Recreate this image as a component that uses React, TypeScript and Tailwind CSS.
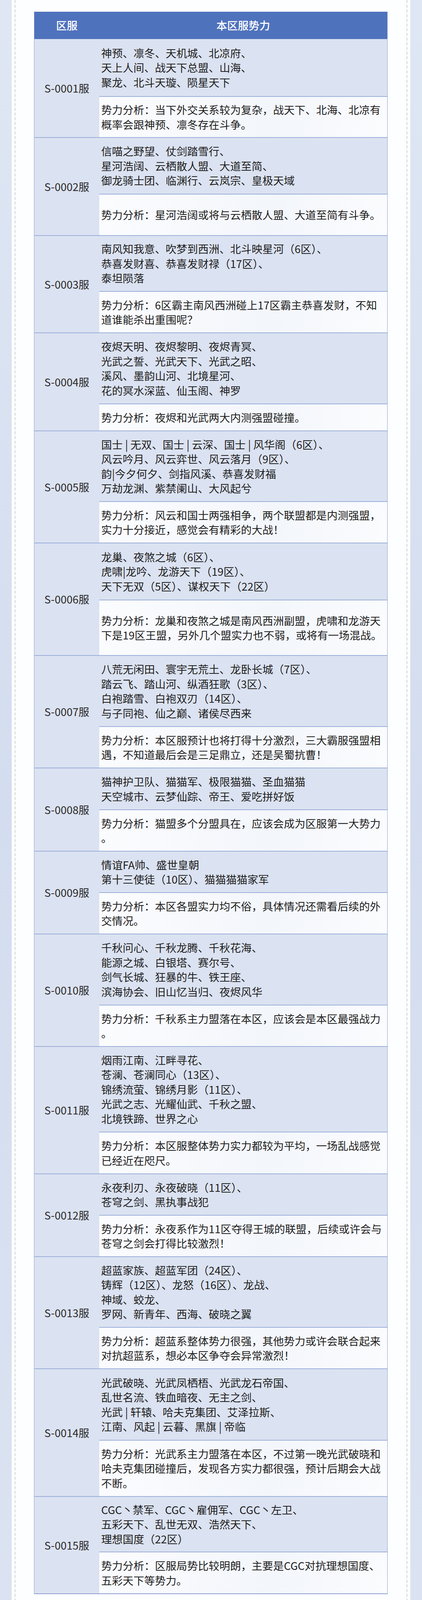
import React from "react";

type Row = {
  id: string;
  names: string[];
  analysis: string[];
  nh: string;
  ah: string;
};

const rows: Row[] = [
  {
    id: "S-0001服",
    names: ["神预、凛冬、天机城、北凉府、", "天上人间、战天下总盟、山海、", "聚龙、北斗天璇、陨星天下"],
    analysis: ["势力分析：当下外交关系较为复杂，战天下、北海、北凉有", "概率会跟神预、凛冬存在斗争。"],
    nh: "h-[146px]",
    ah: "h-[105px]",
  },
  {
    id: "S-0002服",
    names: ["信喵之野望、仗剑踏雪行、", "星河浩阔、云栖散人盟、大道至简、", "御龙骑士团、临渊行、云岚宗、皇极天域"],
    analysis: ["势力分析：星河浩阔或将与云栖散人盟、大道至简有斗争。"],
    nh: "h-[145px]",
    ah: "h-[106px]",
  },
  {
    id: "S-0003服",
    names: ["南风知我意、吹梦到西洲、北斗映星河（6区）、", "恭喜发财喜、恭喜发财禄（17区）、", "泰坦陨落"],
    analysis: ["势力分析：6区霸主南风西洲碰上17区霸主恭喜发财，不知", "道谁能杀出重围呢？"],
    nh: "h-[143px]",
    ah: "h-[106px]",
  },
  {
    id: "S-0004服",
    names: ["夜烬天明、夜烬黎明、夜烬青冥、", "光武之誓、光武天下、光武之昭、", "溪风、墨韵山河、北境星河、", "花的冥水深蓝、仙玉阁、神罗"],
    analysis: ["势力分析：夜烬和光武两大内测强盟碰撞。"],
    nh: "h-[182px]",
    ah: "h-[69px]",
  },
  {
    id: "S-0005服",
    names: ["国士 | 无双、国士 | 云深、国士 | 风华阁（6区）、", "风云吟月、风云弈世、风云落月（9区）、", "韵|今夕何夕、剑指风溪、恭喜发财福", "万劫龙渊、紫禁阑山、大风起兮"],
    analysis: ["势力分析：风云和国士两强相争，两个联盟都是内测强盟，", "实力十分接近，感觉会有精彩的大战！"],
    nh: "h-[181px]",
    ah: "h-[106px]",
  },
  {
    id: "S-0006服",
    names: ["龙巢、夜煞之城（6区）、", "虎啸|龙吟、龙游天下（19区）、", "天下无双（5区）、谋权天下（22区）"],
    analysis: ["势力分析：龙巢和夜煞之城是南风西洲副盟，虎啸和龙游天", "下是19区王盟，另外几个盟实力也不弱，或将有一场混战。"],
    nh: "h-[146px]",
    ah: "h-[142px]",
  },
  {
    id: "S-0007服",
    names: ["八荒无闲田、寰宇无荒土、龙卧长城（7区）、", "踏云飞、踏山河、纵酒狂歌（3区）、", "白袍踏雪、白袍双刃（14区）、", "与子同袍、仙之巅、诸侯尽西来"],
    analysis: ["势力分析：本区服预计也将打得十分激烈，三大霸服强盟相", "遇，不知道最后会是三足鼎立，还是吴蜀抗曹！"],
    nh: "h-[182px]",
    ah: "h-[106px]",
  },
  {
    id: "S-0008服",
    names: ["猫神护卫队、猫猫军、极限猫猫、圣血猫猫", "天空城市、云梦仙踪、帝王、爱吃拼好饭"],
    analysis: ["势力分析：猫盟多个分盟具在，应该会成为区服第一大势力", "。"],
    nh: "h-[107px]",
    ah: "h-[106px]",
  },
  {
    id: "S-0009服",
    names: ["情谊FA帅、盛世皇朝", "第十三使徒（10区）、猫猫猫猫家军"],
    analysis: ["势力分析：本区各盟实力均不俗，具体情况还需看后续的外", "交情况。"],
    nh: "h-[106px]",
    ah: "h-[106px]",
  },
  {
    id: "S-0010服",
    names: ["千秋问心、千秋龙腾、千秋花海、", "能源之城、白银塔、赛尔号、", "剑气长城、狂暴的牛、铁王座、", "滨海协会、旧山忆当归、夜烬风华"],
    analysis: ["势力分析：千秋系主力盟落在本区，应该会是本区最强战力", "。"],
    nh: "h-[182px]",
    ah: "h-[106px]",
  },
  {
    id: "S-0011服",
    names: ["烟雨江南、江畔寻花、", "苍澜、苍澜同心（13区）、", "锦绣流萤、锦绣月影（11区）、", "光武之志、光耀仙武、千秋之盟、", "北境铁蹄、世界之心"],
    analysis: ["势力分析：本区服整体势力实力都较为平均，一场乱战感觉", "已经近在咫尺。"],
    nh: "h-[219px]",
    ah: "h-[107px]",
  },
  {
    id: "S-0012服",
    names: ["永夜利刃、永夜破晓（11区）、", "苍穹之剑、黑执事战犯"],
    analysis: ["势力分析：永夜系作为11区夺得王城的联盟，后续或许会与", "苍穹之剑会打得比较激烈！"],
    nh: "h-[106px]",
    ah: "h-[106px]",
  },
  {
    id: "S-0013服",
    names: ["超蓝家族、超蓝军团（24区）、", "铸辉（12区）、龙怒（16区）、龙战、", "神域、蛟龙、", "罗网、新青年、西海、破晓之翼"],
    analysis: ["势力分析：超蓝系整体势力很强，其他势力或许会联合起来", "对抗超蓝系，想必本区争夺会异常激烈！"],
    nh: "h-[181px]",
    ah: "h-[106px]",
  },
  {
    id: "S-0014服",
    names: ["光武破晓、光武凤栖梧、光武龙石帝国、", "乱世名流、铁血暗夜、无主之剑、", "光武 | 轩辕、哈夫克集团、艾泽拉斯、", "江南、风起 | 云暮、黑旗 | 帝临"],
    analysis: ["势力分析：光武系主力盟落在本区，不过第一晚光武破晓和", "哈夫克集团碰撞后，发现各方实力都很强，预计后期会大战", "不断。"],
    nh: "h-[183px]",
    ah: "h-[144px]",
  },
  {
    id: "S-0015服",
    names: ["CGC丶禁军、CGC丶雇佣军、CGC丶左卫、", "五彩天下、乱世无双、浩然天下、", "理想国度（22区）"],
    analysis: ["势力分析：区服局势比较明朗，主要是CGC对抗理想国度、", "五彩天下等势力。"],
    nh: "h-[142px]",
    ah: "h-[107px]",
  },
];

const font = "font-['Noto_Sans_CJK_SC','Noto_Sans',sans-serif]";

function DashedLine() {
  return (
    <div className="w-px shrink-0 self-stretch bg-[repeating-linear-gradient(to_bottom,#a9a9a9_0px,#a9a9a9_8px,transparent_8px,transparent_12px)]" />
  );
}

export default function App() {
  return (
    <div
      className={`flex min-h-[4096px] w-[1080px] bg-[linear-gradient(to_bottom,#dfe7f4,#d3ddef_50%,#dbe3f2)] ${font}`}
    >
      <div className="w-[30px] shrink-0" />
      <div className="flex flex-1 bg-[#fdfeff]">
        <div className="w-[8px] shrink-0" />
        <DashedLine />
        <div className="flex-1 pl-[48px] pr-[49px] pt-[30px] pb-[10px]">
          <div className="overflow-hidden border-x border-b-2 border-[#8ea3d1] text-[27.5px] leading-[37.5px] text-[#1e1e1e]">
            <div className="flex h-[70px] bg-[#4f72bd] font-medium text-white">
              <div className="flex w-[166px] shrink-0 items-center justify-center">区服</div>
              <div className="flex flex-1 items-center justify-center">本区服势力</div>
            </div>
            {rows.map((r, i) => (
              <div key={r.id} className="flex">
                <div
                  className={`flex w-[166px] shrink-0 items-center justify-center bg-[#dbe2f1] text-[#2a2a2a] ${
                    i === 0 ? "" : "border-t-2 border-[#9cb0da]"
                  }`}
                >
                  {r.id}
                </div>
                <div className="flex flex-1 flex-col">
                  <div
                    className={`flex ${r.nh} flex-col justify-center overflow-hidden bg-[#dbe2f1] pl-[5px] ${
                      i === 0 ? "" : "border-t-2 border-[#9cb0da]"
                    }`}
                  >
                    {r.names.map((n, k) => (
                      <div key={k} className="h-[37.5px] whitespace-nowrap">
                        {n}
                      </div>
                    ))}
                  </div>
                  <div
                    className={`flex ${r.ah} flex-col justify-center overflow-hidden border-t-2 border-[#9cb0da] bg-[linear-gradient(100deg,#fbfcfe,#f3f6fb_60%,#fbfcfe)] pl-[5px]`}
                  >
                    {r.analysis.map((n, k) => (
                      <div key={k} className="h-[37.5px] whitespace-nowrap">
                        {n}
                      </div>
                    ))}
                  </div>
                </div>
              </div>
            ))}
          </div>
        </div>
        <DashedLine />
        <div className="w-[8px] shrink-0" />
      </div>
      <div className="w-[30px] shrink-0" />
    </div>
  );
}
